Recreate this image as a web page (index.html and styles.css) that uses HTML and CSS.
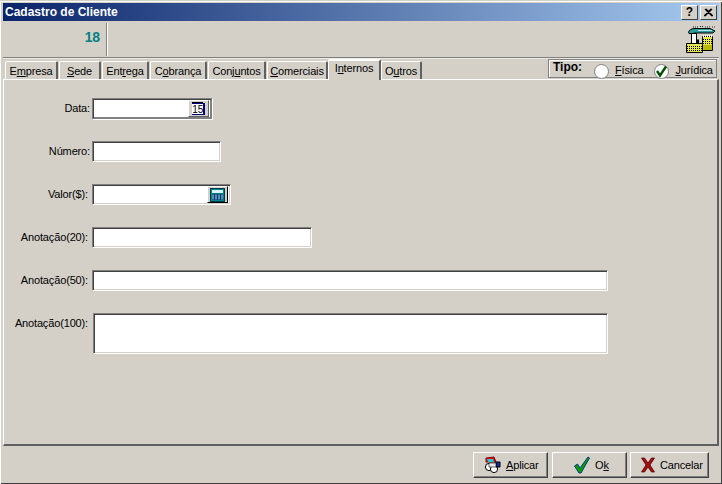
FILE: index.html
```html
<!DOCTYPE html>
<html lang="pt">
<head>
<meta charset="utf-8">
<title>Cadastro de Cliente</title>
<link rel="stylesheet" href="styles.css">
</head>
<body>
<div class="window">
  <header class="titlebar">
    <span class="title">Cadastro de Cliente</span>
    <div class="caption-buttons">
      <button class="caption-btn help" type="button">?</button>
      <button class="caption-btn" type="button">
        <svg width="9" height="9" viewBox="0 0 9 9"><path d="M1 1l7 7M8 1l-7 7M2 1l7 7M7 1l-7 7" stroke="#000" stroke-width="1.1" fill="none"/></svg>
      </button>
    </div>
  </header>
  <div class="toolbar">
    <div class="code">18</div>
    <svg class="factory" width="31" height="27" viewBox="0 0 31 27">
      <path d="M7 1h5M14 0.500h3M19 1h5M26 1h4" stroke="#222" stroke-width="1" stroke-dasharray="1 1" fill="none"/>
      <path d="M2.500 6.500C3 3.500 6 2.500 9 2.500h15l5 2.500-2 2H10c-1 0-2 0-3 .5H3z" fill="#2a9a9a" stroke="#000"/>
      <path d="M12 4.500h14" stroke="#bfe8e8"/>
      <path d="M5.500 7.500h5v10h-5z" fill="#fff" stroke="#000"/>
      <path d="M12 13.500v4" stroke="#000" stroke-width="2"/>
      <path d="M16.500 10.500h10v14h-10z" fill="#e8e84c" stroke="#000"/>
      <path d="M17 10h9" stroke="#fff" stroke-width="2" stroke-dasharray="1 1"/>
      <path d="M17 13.500h9M17 15.500h9M17 17.500h9" stroke="#000" stroke-dasharray="1 1"/>
      <path d="M17 19h9v5h-9z" fill="#b8b800"/>
      <path d="M0.500 17.500h16v9h-16z" fill="#e8e84c" stroke="#000"/>
      <path d="M1 20.500h15M1 22.500h15M1 24.500h15" stroke="#000" stroke-dasharray="1 1"/>
    </svg>
  </div>
  <div class="tabbar">
    <nav class="tabs">
      <a class="tab t1">E<u>m</u>presa</a>
      <a class="tab t2"><u>S</u>ede</a>
      <a class="tab t3">Ent<u>r</u>ega</a>
      <a class="tab t4">C<u>o</u>brança</a>
      <a class="tab t5">Conj<u>u</u>ntos</a>
      <a class="tab t6"><u>C</u>omerciais</a>
      <a class="tab t7 active">I<u>n</u>ternos</a>
      <a class="tab t8">O<u>u</u>tros</a>
    </nav>
    <div class="tipo">
      <strong class="tipo-label">Tipo:</strong>
      <span class="radio"></span>
      <span class="radio-text"><u>F</u>ísica</span>
      <span class="radio">
        <svg width="13" height="13" viewBox="0 0 13 13"><path d="M2 6l3 4.500L11 1.500" stroke="#005000" stroke-width="2.400" fill="none"/></svg>
      </span>
      <span class="radio-text"><u>J</u>urídica</span>
    </div>
  </div>
  <main class="panel">
    <div class="row"><label class="label">Data:</label>
      <div class="field w-data framed"><input class="input" type="text">
        <button class="mini" type="button">
          <svg width="15" height="13" viewBox="0 0 15 13"><rect x="1" y="1" width="13" height="12" fill="#000080"/><rect x="1" y="2" width="11" height="10" fill="#fff"/><rect x="1" y="0" width="11" height="1" fill="#000"/><text x="1.200" y="11" class="cal-num">15</text></svg>
        </button>
      </div>
    </div>
    <div class="row"><label class="label">Número:</label><div class="field w-num"><input class="input" type="text"></div></div>
    <div class="row"><label class="label inset">Valor($):</label>
      <div class="field w-val"><input class="input" type="text">
        <button class="mini dark" type="button">
          <svg width="15" height="14" viewBox="0 0 15 14"><rect x="0.500" y="0.500" width="14" height="13" fill="#008080" stroke="#003c50"/><rect x="2" y="2" width="11" height="3" fill="#d8f4f4"/><path d="M2 7h11M2 9h11M2 11h11" stroke="#000080" stroke-width="1.200"/><path d="M3 6.500v5M6 6.500v5M9 6.500v5M12 6.500v5" stroke="#dff" stroke-width=".8"/></svg>
        </button>
      </div>
    </div>
    <div class="row"><label class="label inset">Anotação(20):</label><div class="field w-20"><input class="input" type="text"></div></div>
    <div class="row"><label class="label inset">Anotação(50):</label><div class="field w-50"><input class="input" type="text"></div></div>
    <div class="row top"><label class="label inset">Anotação(100):</label><div class="field w-100 tall"><textarea class="input"></textarea></div></div>
  </main>
  <footer class="footer">
    <button class="btn b-aplicar" type="button">
      <svg width="16" height="18" viewBox="0 0 16 18"><path d="M1 2l8-1 2 5H1z" fill="#e01010" stroke="#800000"/><path d="M2 3h6l1 3H3z" fill="#20c8d8"/><circle cx="4" cy="11" r="3.600" fill="#fff" stroke="#000"/><circle cx="9" cy="13" r="3.600" fill="#fff" stroke="#000"/><path d="M11 6h4v5h-4z" fill="#1030a0" stroke="#000"/><path d="M4 7h7v4H4z" fill="#e8e8e8" stroke="#000" stroke-width=".6"/></svg>
      <span><u>A</u>plicar</span>
    </button>
    <button class="btn b-ok" type="button">
      <svg width="16" height="18" viewBox="0 0 16 18"><path d="M0.500 10l3-2 2.500 4L14 1l1.500 1L7 17H5z" fill="#0a9a0a" stroke="#003c80" stroke-width="1"/></svg>
      <span>O<u>k</u></span>
    </button>
    <button class="btn b-cancel" type="button">
      <svg width="14" height="16" viewBox="0 0 14 16"><path d="M0.500 1h3L7 6l3.500-5h3L9 8l4.500 7h-3L7 10l-3.500 5h-3L5 8z" fill="#a01010" stroke="#600000" stroke-width=".8"/></svg>
      <span>Cancelar</span>
    </button>
  </footer>
</div>
</body>
</html>
```
FILE: styles.css
```css
* { box-sizing: border-box; }
html, body { margin: 0; padding: 0; }
body {
  width: 722px;
  height: 484px;
  overflow: hidden;
  background: #d4d0c8;
  font-family: "Liberation Sans", Arial, sans-serif;
  font-size: 11px;
  letter-spacing: -0.15px;
  color: #000;
}
u { text-decoration: underline; text-underline-offset: 1px; }
.window {
  width: 722px;
  height: 484px;
  padding: 3px;
  display: flex;
  flex-direction: column;
  background: #d4d0c8;
  border-top: 1px solid #d4d0c8;
  box-shadow: inset 1px 1px 0 #fff, inset -1px -1px 0 #404040;
}
.titlebar {
  height: 18px;
  margin-top: -1px;
  padding: 0 2px;
  display: flex;
  align-items: center;
  justify-content: space-between;
  background: linear-gradient(90deg, #0a246a, #a6caf0);
}
.title { color: #fff; font-weight: bold; font-size: 12px; letter-spacing: 0; }
.caption-buttons { display: flex; gap: 2px; margin-right: 0; }
.caption-btn {
  width: 17px;
  height: 15px;
  padding: 0;
  display: flex;
  align-items: center;
  justify-content: center;
  background: #d4d0c8;
  border: 1px solid;
  border-color: #fff #404040 #404040 #fff;
  font: bold 12px "Liberation Sans", sans-serif;
  color: #000;
}
.toolbar {
  height: 37px;
  flex: none;
  display: flex;
  align-items: flex-start;
  justify-content: space-between;
  border-bottom: 1px solid #808080;
  box-shadow: 0 1px 0 #ece9e2;
}
.code {
  width: 104px;
  height: 33px;
  margin-top: 2px;
  padding: 6px 6px 0 0;
  text-align: right;
  color: #008080;
  font-size: 14px;
  font-weight: bold;
  border-right: 1px solid #808080;
  box-shadow: 1px 0 0 #fff;
}
.factory { margin: 5px 2px 0 0; }
.tabbar {
  height: 21px;
  flex: none;
  display: flex;
  justify-content: space-between;
  align-items: flex-start;
}
.tabs { display: flex; align-items: flex-end; padding-left: 2px; height: 21px; }
.tab {
  height: 18px;
  padding-top: 3px;
  text-align: center;
  white-space: nowrap;
  background: #d4d0c8;
  border-top: 1px solid #fff;
  border-left: 1px solid #fff;
  border-right: 2px solid #606060;
  border-radius: 2px 2px 0 0;
  margin-right: 1px;
}
.t1 { width: 53px; }
.t2 { width: 42px; }
.t3 { width: 47px; }
.t4 { width: 57px; }
.t5 { width: 58px; }
.t6 { width: 61px; margin-right: 0; }
.t7 { width: 53px; margin-right: 0; }
.t8 { width: 41px; }
.tab.active {
  height: 21px;
  padding-top: 1px;
  position: relative;
  z-index: 1;
  margin-bottom: -1px;
  border-top: 2px solid #fff;
}
.tipo {
  width: 169px;
  height: 19px;
  margin: 1px 2px 0 0;
  padding: 0 0 0 4px;
  display: flex;
  align-items: center;
  border: 1px solid #808080;
  box-shadow: inset 1px 1px 0 #fff;
}
.tipo-label { width: 41px; flex: none; font-size: 12px; margin-top: -3px; letter-spacing: 0; }
.radio {
  width: 15px;
  height: 15px;
  margin-top: 5px;
  border-radius: 50%;
  background: #fff;
  border: 1px solid #808080;
  display: flex;
  align-items: center;
  justify-content: center;
  flex: none;
}
.radio-text { margin: 2px 11px 0 6px; flex: none; white-space: nowrap; }
.panel {
  flex: 1;
  display: flex;
  flex-direction: column;
  gap: 22px;
  padding-top: 18px;
  border-top: 1px solid #fff;
  border-left: 1px solid #fff;
  border-right: 2px solid #606060;
  border-bottom: 2px solid #606060;
  min-height: 0;
}
.row { display: flex; align-items: center; height: 21px; }
.row.top { align-items: flex-start; height: 41px; }
.label { width: 88px; padding-right: 2px; margin-top: -1px; text-align: right; white-space: nowrap; }
.label.inset { padding-right: 4px; }
.row.top .label { padding-top: 5px; }
.field {
  height: 21px;
  display: flex;
  align-items: center;
  background: #fff;
  border: 1px solid;
  border-color: #808080 #fff #fff #808080;
  box-shadow: inset 1px 1px 0 #404040, inset -1px -1px 0 #d4d0c8;
  padding: 2px;
}
.field.framed { border-color: #808080; box-shadow: inset 1px 1px 0 #404040, inset -1px -1px 0 #808080, 1px 1px 0 #fff; }
.w-data { width: 120px; }
.w-num { width: 129px; }
.w-val { width: 139px; }
.w-20 { width: 220px; }
.w-50 { width: 516px; }
.w-100 { width: 515px; margin-left: 1px; }
.tall { height: 41px; }
.input {
  flex: 1;
  min-width: 0;
  height: 100%;
  border: 0;
  padding: 0;
  margin: 0;
  outline: 0;
  background: transparent;
  resize: none;
  display: block;
}
.mini {
  width: 21px;
  height: 17px;
  padding: 0;
  display: flex;
  align-items: center;
  justify-content: center;
  background: #d4d0c8;
  border: 1px solid;
  border-color: #fff #606060 #606060 #fff;
  flex: none;
}
.mini.dark { border-color: #fff #000 #000 #fff; }
.cal-num { font: 10px "Liberation Sans", sans-serif; fill: #000; }
.footer {
  height: 35px;
  flex: none;
  display: flex;
  justify-content: flex-end;
  align-items: flex-start;
  padding: 6px 10px 0 0;
  gap: 3px;
}
.btn {
  height: 26px;
  padding: 0;
  display: flex;
  align-items: center;
  gap: 5px;
  background: #d4d0c8;
  font: 11px "Liberation Sans", sans-serif;
  letter-spacing: -0.15px;
  color: #000;
  border: 1px solid;
  border-color: #fff #404040 #404040 #fff;
  box-shadow: inset -1px -1px 0 #808080;
}
.b-aplicar { width: 75px; margin-right: 1px; padding-left: 11px; }
.b-ok { width: 75px; padding-left: 21px; }
.b-cancel { width: 79px; padding-left: 10px; }
```
